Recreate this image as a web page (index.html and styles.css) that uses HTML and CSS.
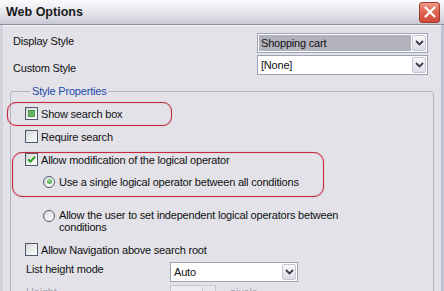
FILE: index.html
```html
<!DOCTYPE html>
<html>
<head>
<meta charset="utf-8">
<link rel="stylesheet" href="styles.css">
</head>
<body>
<div class="window">
  <div class="titlebar">
    <span class="title">Web Options</span>
    <span class="close"><svg width="12" height="12" viewBox="0 0 12 12"><path d="M1.5 1.5 L10.5 10.5 M10.5 1.5 L1.5 10.5" stroke="#fff" stroke-width="2.2" stroke-linecap="round"/></svg></span>
  </div>
  <div class="panel">
    <div class="top">
      <div class="labels">
        <div class="lbl">Display Style</div>
        <div class="lbl">Custom Style</div>
      </div>
      <div class="combos">
        <div class="combo"><span class="val selected">Shopping cart</span><span class="btn"><svg width="9" height="6" viewBox="0 0 9 6"><path d="M1 1 L4.5 4.5 L8 1" fill="none" stroke="#3c3c50" stroke-width="1.8"/></svg></span></div>
        <div class="combo"><span class="val">[None]</span><span class="btn"><svg width="9" height="6" viewBox="0 0 9 6"><path d="M1 1 L4.5 4.5 L8 1" fill="none" stroke="#3c3c50" stroke-width="1.8"/></svg></span></div>
      </div>
    </div>
    <fieldset class="group">
      <legend>Style Properties</legend>
      <div class="row r1"><span class="cb"><span class="mixed"></span></span><span class="txt">Show search box</span></div>
      <div class="row r2"><span class="cb"></span><span class="txt">Require search</span></div>
      <div class="row r3"><span class="cb"><svg width="11" height="11" viewBox="0 0 11 11"><path d="M2.2 5.2 L4.5 7.6 L9 2.8" fill="none" stroke="#21a121" stroke-width="2"/></svg></span><span class="txt">Allow modification of the logical operator</span></div>
      <div class="row r4 sub"><span class="rb on"><span class="dot"></span></span><span class="txt">Use a single logical operator between all conditions</span></div>
      <div class="row r5 sub multi"><span class="rb"></span><span class="txt">Allow the user to set independent logical operators between<br>conditions</span></div>
      <div class="row r6"><span class="cb"></span><span class="txt">Allow Navigation above search root</span></div>
      <div class="row r7 field"><span class="flbl">List height mode</span><div class="combo small"><span class="val">Auto</span><span class="btn"><svg width="9" height="6" viewBox="0 0 9 6"><path d="M1 1 L4.5 4.5 L8 1" fill="none" stroke="#3c3c50" stroke-width="1.8"/></svg></span></div></div>
      <div class="row r8 field disabled"><span class="flbl">Height</span><div class="spin"><span class="spinbtn"></span></div><span class="unit">pixels</span></div>
    </fieldset>
  </div>
  <div class="mark mark1"></div>
  <div class="mark mark2"></div>
</div>
</body>
</html>
```

FILE: styles.css
```css
html, body {
  margin: 0;
  padding: 0;
}
body {
  width: 444px;
  height: 291px;
  overflow: hidden;
  font-family: "Liberation Sans", Arial, sans-serif;
  font-size: 11px;
  letter-spacing: -0.2px;
  color: #111;
  background: #e2e2e8;
}
.window {
  position: relative;
  width: 444px;
  height: 291px;
  display: flex;
  flex-direction: column;
  background: #e2e2e8;
}
.titlebar {
  height: 24px;
  flex: none;
  display: flex;
  align-items: center;
  padding-left: 6px;
  background: linear-gradient(#fbfbfd 0%, #ececf2 35%, #d6d6e2 80%, #c8c8d6 100%);
  border-bottom: 1px solid #8e8ea0;
  box-shadow: 0 1px 0 #f6f6fa;
}
.title {
  font-weight: bold;
  font-size: 12.5px;
  letter-spacing: 0;
  color: #1a1a1a;
}
.close {
  margin-left: auto;
  margin-right: 4px;
  width: 19px;
  height: 19px;
  border: 1px solid #a23a30;
  border-radius: 3px;
  background: linear-gradient(#ee9a88 0%, #e06a56 40%, #cf4a36 100%);
  display: flex;
  align-items: center;
  justify-content: center;
}
.panel {
  flex: 1;
  display: flex;
  flex-direction: column;
  padding-top: 1px;
  box-shadow: inset 3px 0 #d2d2dc, inset -3px 0 #c2c2d6;
}
.top {
  display: flex;
}
.labels {
  padding: 8px 0 0 13px;
  display: flex;
  flex-direction: column;
  gap: 13px;
}
.lbl {
  line-height: 14px;
}
.combos {
  margin-left: auto;
  margin-right: 16px;
  padding-top: 7px;
  display: flex;
  flex-direction: column;
  gap: 2px;
}
.combo {
  width: 171px;
  height: 20px;
  box-sizing: border-box;
  border: 1px solid #9ea4b8;
  background: #fff;
  display: flex;
  align-items: stretch;
  padding: 1px;
}
.combo .val {
  flex: 1;
  display: flex;
  align-items: center;
  padding-left: 2px;
  line-height: 14px;
}
.combo .val.selected {
  background: #b2b2bc;
  margin-right: 1px;
}
.combo .btn {
  width: 14px;
  box-sizing: border-box;
  border: 1px solid #c4c6d4;
  border-radius: 2px;
  background: linear-gradient(#fafafc, #dcdce6);
  display: flex;
  align-items: center;
  justify-content: center;
}
.combo.small {
  width: 128px;
}
.group {
  margin: 9px 10px 0 10px;
  padding: 9px 0 0 14px;
  border: 1px solid #b6b6c0;
  border-radius: 3px;
  flex: 1;
  min-width: 0;
  display: flex;
  flex-direction: column;
}
.group legend {
  margin-left: 5px;
  padding: 0 2px;
  color: #1e4aa8;
  line-height: 14px;
}
.row {
  display: flex;
  align-items: center;
  height: 13px;
  flex: none;
}
.row .txt {
  line-height: 12px;
  margin-left: 3px;
  white-space: nowrap;
}
.r2, .r3, .r6 { margin-top: 10px; }
.r4 { margin-top: 9px; }
.r5 { margin-top: 21px; }
.r7 { margin-top: 6px; }
.r8 { margin-top: 3px; }
.sub { padding-left: 18px; }
.sub .txt { margin-left: 4px; }
.multi {
  height: 24px;
  align-items: flex-start;
}
.cb {
  width: 13px;
  height: 13px;
  box-sizing: border-box;
  border: 1px solid #4f5a70;
  background: linear-gradient(135deg, #d6d6d6 0%, #ececec 50%, #ffffff 100%);
  display: flex;
  align-items: center;
  justify-content: center;
  flex: none;
}
.cb .mixed {
  width: 7px;
  height: 7px;
  box-sizing: border-box;
  background: #66b266;
  border: 1px solid #4c9a4c;
}
.rb {
  width: 12px;
  height: 12px;
  box-sizing: border-box;
  border: 1px solid #4f5a70;
  border-radius: 50%;
  background: linear-gradient(135deg, #d6d6d6 0%, #eeeeee 50%, #ffffff 100%);
  display: flex;
  align-items: center;
  justify-content: center;
  flex: none;
}
.multi .rb { margin-top: 1px; }
.rb .dot {
  width: 5px;
  height: 5px;
  border-radius: 50%;
  background: radial-gradient(circle at 40% 35%, #8fe08f, #2f9a2f);
}
.field {
  height: 20px;
  align-items: flex-start;
  padding-left: 1px;
}
.flbl {
  width: 144px;
  line-height: 14px;
}
.disabled .flbl, .disabled .unit {
  color: #a4a4ae;
}
.spin {
  width: 46px;
  height: 20px;
  box-sizing: border-box;
  border: 1px solid #c4c6d0;
  background: #ececf0;
  display: flex;
  justify-content: flex-end;
  padding: 1px;
}
.spinbtn {
  width: 11px;
  border-left: 1px solid #c8c8d4;
  background: #e6e6ee;
}
.unit {
  margin-left: 14px;
  line-height: 14px;
}
.mark {
  position: absolute;
  border: 1px solid #c42a3e;
  box-shadow: 0 0 1px #e07888, inset 0 0 1px #e07888;
  pointer-events: none;
}
.mark1 {
  left: 7px;
  top: 102px;
  width: 163px;
  height: 22px;
  border-radius: 9px;
}
.mark2 {
  left: 12px;
  top: 152px;
  width: 310px;
  height: 43px;
  border-radius: 10px;
}
```
